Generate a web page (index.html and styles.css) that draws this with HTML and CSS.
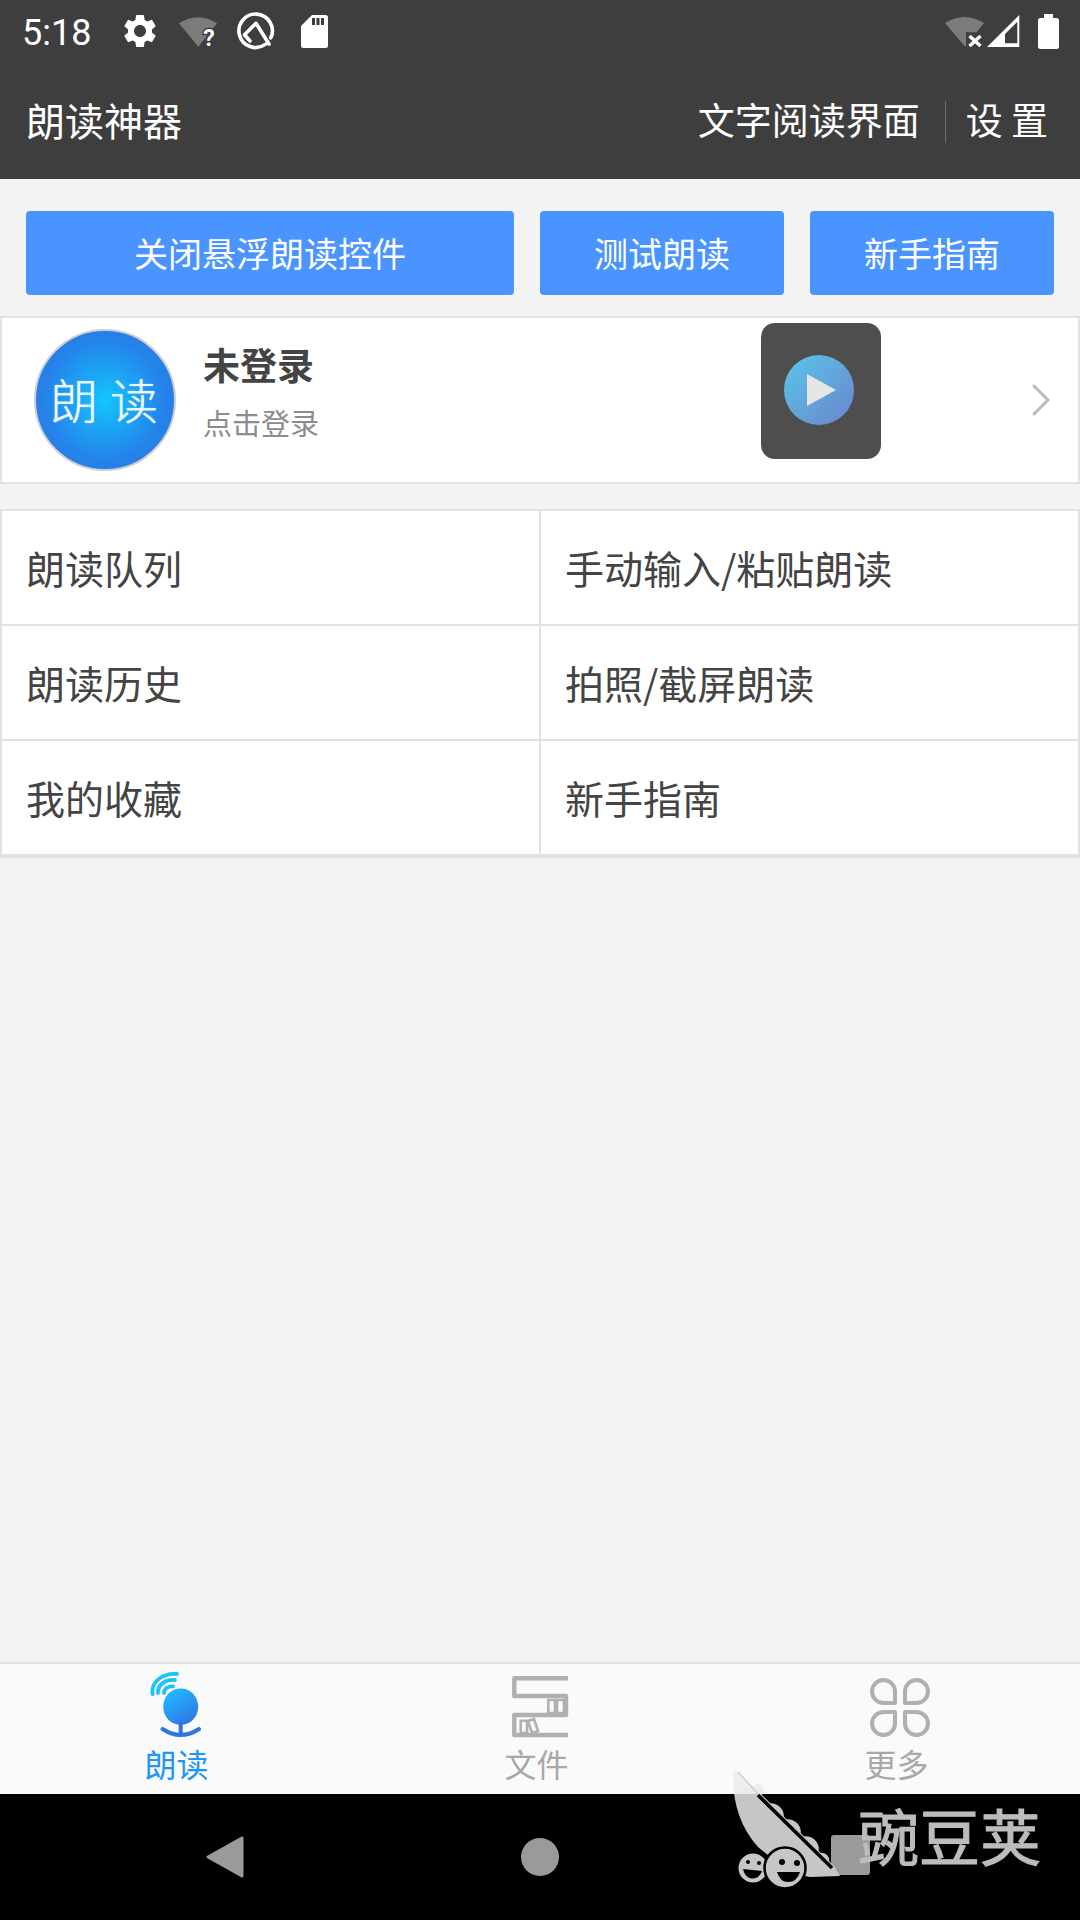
FILE: index.html
```html
<!DOCTYPE html>
<html lang="zh-CN">
<head>
    <meta charset="UTF-8">
    <meta name="viewport" content="width=device-width, initial-scale=1.0">
    <title>朗读神器</title>
    <link rel="stylesheet" href="styles.css">
</head>
<body>
    <div class="phone">
        <div class="status-bar">
            <span class="status-time">5:18</span>
            <!-- gear -->
            <svg class="icon-gear" width="40" height="40" viewBox="0 0 24 24"><path fill="#fff" d="M19.14 12.94c.04-.3.06-.61.06-.94 0-.32-.02-.64-.07-.94l2.03-1.58c.18-.14.23-.41.12-.61l-1.92-3.32c-.12-.22-.37-.29-.59-.22l-2.39.96c-.5-.38-1.03-.7-1.62-.94l-.36-2.54c-.04-.24-.24-.41-.48-.41h-3.84c-.24 0-.43.17-.47.41l-.36 2.54c-.59.24-1.13.57-1.62.94l-2.39-.96c-.22-.08-.47 0-.59.22L2.74 8.87c-.12.21-.08.47.12.61l2.03 1.58c-.05.3-.09.63-.09.94s.02.64.07.94l-2.03 1.58c-.18.14-.23.41-.12.61l1.92 3.32c.12.22.37.29.59.22l2.39-.96c.5.38 1.03.7 1.62.94l.36 2.54c.05.24.24.41.48.41h3.84c.24 0 .44-.17.47-.41l.36-2.54c.59-.24 1.13-.56 1.62-.94l2.39.96c.22.08.47 0 .59-.22l1.92-3.32c.12-.22.07-.47-.12-.61l-2.01-1.58zM12 15.6c-1.98 0-3.6-1.62-3.6-3.6s1.62-3.6 3.6-3.6 3.6 1.62 3.6 3.6-1.62 3.6-3.6 3.6z"/></svg>
            <!-- wifi with question mark -->
            <svg class="icon-wifi-q" width="42" height="46" viewBox="0 -6 42 46">
                <path fill="#7b7b7b" d="M1 9.3 Q20 -3 39 9.3 L20.3 32.7 Z"/>
                <text class="wifi-mark" x="31" y="32">?</text>
            </svg>
            <!-- android q -->
            <svg class="icon-q" width="40" height="40" viewBox="0 0 40 40">
                <path fill="none" stroke="#fff" stroke-width="3.6" stroke-linecap="round" d="M29.3 33.4 A16.7 16.7 0 1 1 34.8 26.8"/>
                <path fill="none" stroke="#fff" stroke-width="3.6" stroke-linejoin="round" stroke-linecap="round" d="M14 30 L8.5 23.7 L20 12.3 L33 33"/>
            </svg>
            <!-- sd card -->
            <svg class="icon-sd" width="27" height="33" viewBox="0 0 27 33">
                <path fill="#fff" d="M11 0 H24.5 Q27 0 27 2.5 V30.5 Q27 33 24.5 33 H2.5 Q0 33 0 30.5 V11 Z"/>
                <path fill="#3e3e3e" d="M11 3 H14 V10 H11 Z M15.5 3 H18.5 V10 H15.5 Z M20 3 H23 V10 H20 Z"/>
            </svg>
            <div class="status-right">
                <!-- wifi with x -->
                <svg width="40" height="34" viewBox="0 0 40 34">
                    <path fill="#7b7b7b" d="M0 9 Q19.5 -3 39 9 L31.7 18.3 H21 V32 L20 32.6 Z"/>
                    <path stroke="#fff" stroke-width="3.4" d="M24.5 22 L35.5 32 M35.5 22 L24.5 32"/>
                </svg>
                <!-- signal -->
                <svg class="icon-signal" width="34" height="33" viewBox="0 0 34 33">
                    <path fill="#fff" fill-rule="evenodd" d="M32.3 0 V32 H0 Z M18 28.3 H30.3 V6.7 L18 19 Z"/>
                </svg>
                <!-- battery -->
                <svg class="icon-battery" width="21" height="35" viewBox="0 0 21 35">
                    <path fill="#fff" d="M6 0 H15 V4 H18.5 Q21 4 21 6.5 V32.5 Q21 35 18.5 35 H2.5 Q0 35 0 32.5 V6.5 Q0 4 2.5 4 H6 Z"/>
                </svg>
            </div>
        </div>

        <header class="toolbar">
            <div class="toolbar-title">朗读神器</div>
            <div class="toolbar-link">文字阅读界面</div>
            <div class="toolbar-sep"></div>
            <div class="toolbar-link toolbar-settings">设 置</div>
        </header>

        <main class="content">
            <div class="actions">
                <button class="action-button">关闭悬浮朗读控件</button>
                <button class="action-button">测试朗读</button>
                <button class="action-button">新手指南</button>
            </div>

            <div class="profile-card">
                <div class="avatar"><span>朗</span><span>读</span></div>
                <div class="profile-text">
                    <div class="profile-name">未登录</div>
                    <div class="profile-hint">点击登录</div>
                </div>
                <svg class="chevron" width="20" height="32" viewBox="0 0 20 32"><path fill="none" stroke="#bcbcbc" stroke-width="3" stroke-linecap="round" stroke-linejoin="round" d="M3 2 L17 16 L3 30"/></svg>
                <div class="float-widget">
                    <div class="float-play"><div class="float-triangle"></div></div>
                </div>
            </div>

            <div class="menu-grid">
                <div class="menu-item">朗读队列</div>
                <div class="menu-item menu-item-right">手动输入/粘贴朗读</div>
                <div class="menu-item">朗读历史</div>
                <div class="menu-item menu-item-right">拍照/截屏朗读</div>
                <div class="menu-item">我的收藏</div>
                <div class="menu-item menu-item-right">新手指南</div>
            </div>
        </main>

        <nav class="tab-bar">
            <div class="tab tab-active">
                <svg class="tab-icon" width="60" height="70" viewBox="0 0 60 70">
                    <defs>
                        <linearGradient id="micBall" x1="0.2" y1="0" x2="0.8" y2="1">
                            <stop offset="0" stop-color="#1fbcff"/>
                            <stop offset="1" stop-color="#2f74e4"/>
                        </linearGradient>
                    </defs>
                    <g fill="none" stroke="#1cc4fb" stroke-width="3.8" stroke-linecap="round">
                        <path d="M2.5 24 C1 12 12 3 27 4"/>
                        <path d="M8 23 C7.5 15 15 9 25 10"/>
                        <path d="M14 23 C14 19 18 16 23 16.5"/>
                    </g>
                    <ellipse cx="30.7" cy="36.7" rx="17.5" ry="18.3" fill="url(#micBall)"/>
                    <path fill="none" stroke="#2f74e4" stroke-width="4" stroke-linecap="round" d="M30.7 53 V64 M12.5 59 Q30.7 71 49 59"/>
                </svg>
                <span class="tab-label">朗读</span>
            </div>
            <div class="tab">
                <svg class="tab-icon" width="60" height="70" viewBox="0 0 60 70">
                    <path fill="none" stroke="#b0b0b0" stroke-width="4.4" stroke-linejoin="round" d="M58 8.3 H4.3 V26 H56 V45 H4.3 V65 H58"/>
                    <path fill="none" stroke="#b0b0b0" stroke-width="2.6" d="M38.3 30 H45 V43 H38.3 Z M47 30 H54 V43 H47 Z M10.7 50.7 H17 V63 H10.7 Z M18 51 L24 49 L28 61 L22 63 Z"/>
                </svg>
                <span class="tab-label">文件</span>
            </div>
            <div class="tab">
                <svg class="tab-icon" width="60" height="70" viewBox="0 0 60 70">
                    <g fill="none" stroke="#b0b0b0" stroke-width="4" stroke-linejoin="round">
                        <path d="M25 33 H13.5 A11.5 11.5 0 1 1 25 21.5 Z"/>
                        <path d="M35 33 V21.5 A11.5 11.5 0 1 1 46.5 33 Z"/>
                        <path d="M25 42 V53.5 A11.5 11.5 0 1 1 13.5 42 Z"/>
                        <path d="M35 42 H46.5 A11.5 11.5 0 1 1 35 53.5 Z"/>
                    </g>
                </svg>
                <span class="tab-label">更多</span>
            </div>
        </nav>

        <div class="nav-bar">
            <div class="nav-slot"><svg width="40" height="44" viewBox="0 0 40 44"><path fill="#9a9a9a" stroke="#9a9a9a" stroke-width="3" stroke-linejoin="round" d="M3 22 L37 3 V41 Z"/></svg></div>
            <div class="nav-slot"><div class="nav-home"></div></div>
            <div class="nav-slot"><div class="nav-recent"></div></div>
        </div>

        <!-- watermark sits over tab bar and nav bar -->
        <svg class="watermark-pod" width="140" height="130" viewBox="0 0 140 130">
            <defs>
                <linearGradient id="podFade" gradientUnits="userSpaceOnUse" x1="0" y1="0" x2="0" y2="130">
                    <stop offset="0" stop-color="#f2f2f2"/>
                    <stop offset="0.222" stop-color="#ececec"/>
                    <stop offset="0.223" stop-color="#c6c6c6"/>
                    <stop offset="1" stop-color="#c6c6c6"/>
                </linearGradient>
            </defs>
            <g fill="url(#podFade)">
                <path d="M4 4 C1 30 8 60 28 82 L60 108 L80 112 L110 111 L104 101 L30 28 Z"/>
                <circle cx="28" cy="25" r="6"/>
                <circle cx="40.8" cy="51.2" r="13"/>
                <circle cx="57.8" cy="67.2" r="13"/>
                <circle cx="75.8" cy="84.2" r="13"/>
                <circle cx="91.3" cy="95.7" r="8"/>
            </g>
            <path stroke="#cfcfcf" stroke-width="1.5" d="M8 7 L28 29"/>
            <path stroke="#000" stroke-width="3.5" d="M28 30 L102 103"/>
            <circle cx="23" cy="103" r="15.5" fill="#c6c6c6" stroke="#000" stroke-width="2"/>
            <circle cx="55" cy="103" r="20.5" fill="#c6c6c6" stroke="#000" stroke-width="2.5"/>
            <path fill="#000" d="M13 104 L32 106 Q29 114 22 113.5 Q15 113 13 104 Z M47 107 H70 Q67 117 58 117 Q50 117 47 107 Z"/>
            <circle cx="18" cy="97" r="2" fill="#000"/>
            <circle cx="29" cy="98" r="2" fill="#000"/>
            <circle cx="52" cy="97" r="3" fill="#000"/>
            <circle cx="67" cy="98" r="3" fill="#000"/>
        </svg>
        <div class="watermark-text">豌豆荚</div>
    </div>
</body>
</html>
```

FILE: styles.css
```css
* {
    box-sizing: border-box;
}

body {
    margin: 0;
    font-family: "Noto Sans CJK SC", "Noto Sans", sans-serif;
    color: #444;
}

.phone {
    position: relative;
    width: 1080px;
    height: 1920px;
    display: flex;
    flex-direction: column;
    overflow: hidden;
    background-color: #f3f3f3;
}

/* status bar */
.status-bar {
    height: 64px;
    display: flex;
    align-items: center;
    padding: 0 21px 2px 22px;
    background-color: #3e3e3e;
    color: #fff;
}

.status-time {
    font-family: Roboto, sans-serif;
    font-size: 36px;
    width: 98px;
    margin-top: 3px;
}

.icon-wifi-q {
    margin-left: 18px;
}

.wifi-mark {
    font-family: Roboto, sans-serif;
    font-size: 23px;
    font-weight: 700;
    fill: #fff;
    text-anchor: middle;
    stroke: #3e3e3e;
    stroke-width: 3px;
    paint-order: stroke;
}

.icon-q {
    margin-left: 16px;
}

.icon-sd {
    margin-left: 25px;
}

.status-right {
    margin-left: auto;
    display: flex;
    align-items: center;
}

.icon-signal {
    margin-left: 2px;
}

.icon-battery {
    margin-left: 17px;
}

/* toolbar */
.toolbar {
    height: 115px;
    display: flex;
    align-items: center;
    padding: 0 32px 5px 26px;
    background-color: #3e3e3e;
    color: #fff;
}

.toolbar-title {
    font-size: 39px;
    margin-right: auto;
}

.toolbar-link {
    font-size: 37px;
}

.toolbar-sep {
    width: 1px;
    height: 42px;
    margin: 5px 20px 0 25px;
    background-color: #6e6e6e;
}

/* action buttons */
.content {
    flex: 1;
}

.actions {
    display: grid;
    grid-template-columns: 2fr 1fr 1fr;
    gap: 26px;
    padding: 32px 26px 0;
}

.action-button {
    height: 84px;
    border: none;
    border-radius: 4px;
    padding: 0 0 2px;
    background-color: #4a94ff;
    color: #fff;
    font-family: inherit;
    font-size: 34px;
}

/* profile */
.profile-card {
    position: relative;
    height: 168px;
    margin-top: 21px;
    display: flex;
    align-items: center;
    padding-left: 32px;
    background-color: #fff;
    border: 2px solid #e2e2e2;
}

.avatar {
    width: 142px;
    height: 142px;
    flex-shrink: 0;
    display: flex;
    align-items: center;
    justify-content: center;
    gap: 12px;
    padding: 0 2px 5px 0;
    border-radius: 50%;
    border: 2px solid #cfcfcf;
    background: radial-gradient(circle, #12c6ff 0%, #2484ea 60%, #2b70dc 100%);
    color: #e8f8ff;
    font-size: 48px;
    font-weight: 300;
    text-shadow: 0 0 1px #fff;
}

.profile-text {
    margin-left: 27px;
    margin-bottom: 18px;
}

.profile-name {
    font-size: 37px;
    font-weight: 700;
    line-height: 52px;
    margin-top: -2px;
}

.profile-hint {
    font-size: 29px;
    line-height: 42px;
    margin-top: 11px;
    color: #8c8c8c;
}

.chevron {
    margin-left: auto;
    margin-right: 27px;
}

.float-widget {
    position: absolute;
    left: 759px;
    top: 5px;
    width: 120px;
    height: 136px;
    display: flex;
    align-items: center;
    justify-content: center;
    padding: 0 5px 2px 0;
    border-radius: 14px;
    background-color: #4e4e4e;
}

.float-play {
    width: 70px;
    height: 70px;
    display: flex;
    align-items: center;
    justify-content: center;
    border-radius: 50%;
    background: linear-gradient(135deg, #59c8ea, #6b82cc);
}

.float-triangle {
    width: 0;
    height: 0;
    margin-left: 6px;
    border-left: 29px solid #e6e6e6;
    border-top: 16px solid transparent;
    border-bottom: 16px solid transparent;
}

/* menu */
.menu-grid {
    display: grid;
    grid-template-columns: 1fr 1fr;
    gap: 2px;
    margin-top: 25px;
    padding: 2px 2px 4px;
    background-color: #e2e2e2;
}

.menu-item {
    height: 113px;
    display: flex;
    align-items: center;
    padding: 0 0 2px 24px;
    background-color: #fff;
    font-size: 39px;
}

/* bottom tabs */
.tab-bar {
    height: 132px;
    display: grid;
    grid-template-columns: repeat(3, 1fr);
    border-top: 2px solid #e2e2e2;
    background-color: #fafafa;
}

.tab {
    display: flex;
    flex-direction: column;
    align-items: center;
    padding-top: 6px;
    color: #a8a8a8;
}

.tab-active {
    color: #2196f3;
}

.tab-icon {
    display: block;
}

.tab-label {
    font-size: 32px;
    line-height: 44px;
    margin: 1px 7px 0 0;
}

/* system nav */
.nav-bar {
    height: 126px;
    display: flex;
    align-items: center;
    justify-content: center;
    background-color: #000;
}

.nav-slot {
    width: 315px;
    display: flex;
    justify-content: center;
}

.nav-home {
    width: 38px;
    height: 38px;
    border-radius: 50%;
    background-color: #9a9a9a;
}

.nav-recent {
    width: 39px;
    height: 40px;
    margin: 0 9px 4px 0;
    border-radius: 3px;
    background-color: #9a9a9a;
}

/* watermark */
.watermark-pod {
    position: absolute;
    left: 730px;
    top: 1765px;
}

.watermark-text {
    position: absolute;
    left: 858px;
    top: 1790px;
    font-size: 61px;
    line-height: 90px;
    color: #bcbcbc;
    white-space: nowrap;
    -webkit-text-stroke: 1.2px #bcbcbc;
    filter: blur(0.5px);
}
```
